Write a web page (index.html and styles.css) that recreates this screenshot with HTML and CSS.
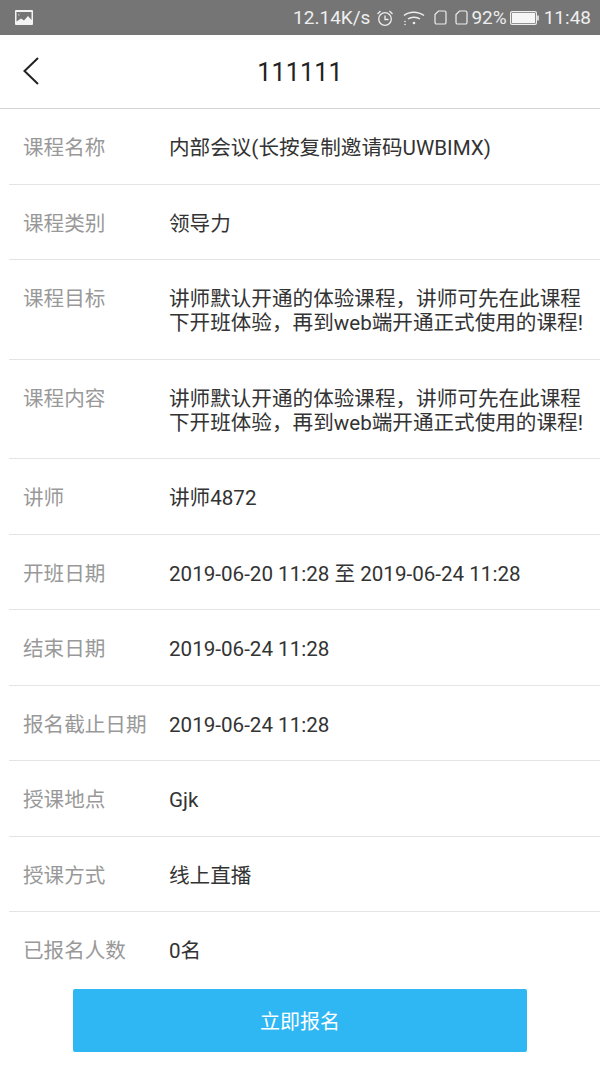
FILE: index.html
```html
<!DOCTYPE html>
<html lang="zh">
<head>
<meta charset="utf-8">
<title>111111</title>
<link rel="stylesheet" href="styles.css">
</head>
<body>
<div class="statusbar">
  <svg class="pic" width="18" height="15" viewBox="0 0 18 15"><rect width="18" height="15" rx="1" fill="#f4f4f4"/><path d="M1.500 2h15v8l-3.500-4-4 4.500-3-2-4.500 3z" fill="#757575"/><circle cx="4.500" cy="4" r="1.500" fill="#f4f4f4"/><path d="M1.500 2h3l3 3-2 1.500z" fill="#757575"/></svg>
  <div class="status-right">
    <span class="speed">12.14K/s</span>
    <svg class="ic-alarm" width="18" height="18" viewBox="0 0 18 18" fill="none" stroke="#eee" stroke-width="1.300"><circle cx="9" cy="10" r="6.300"/><path d="M9 6.500V10.500H12.500M1.500 5 4.500 2M16.500 5 13.500 2"/></svg>
    <svg class="ic-wifi" width="22" height="16" viewBox="0 0 22 16" fill="none" stroke="#eee" stroke-width="1.500"><path d="M1 5.500C6 1 15 1 21 5.500M5 9C8 6.500 14 6.500 17 9"/><circle cx="11" cy="13" r="1.300" fill="#eee" stroke="none"/><circle cx="2" cy="14.500" r=".8" fill="#eee" stroke="none"/><circle cx="2" cy="11.500" r=".8" fill="#eee" stroke="none"/></svg>
    <svg class="ic-sim" width="13" height="15" viewBox="0 0 13 15" fill="none" stroke="#eee" stroke-width="1.200"><path d="M4.500 1H10.500A1.500 1.500 0 0 1 12 2.500V12.500A1.500 1.500 0 0 1 10.500 14H2.500A1.500 1.500 0 0 1 1 12.500V4.500z"/></svg>
    <svg class="ic-sim2" width="13" height="15" viewBox="0 0 13 15" fill="none" stroke="#eee" stroke-width="1.200"><path d="M4.500 1H10.500A1.500 1.500 0 0 1 12 2.500V12.500A1.500 1.500 0 0 1 10.500 14H2.500A1.500 1.500 0 0 1 1 12.500V4.500z"/></svg>
    <span class="pct">92%</span>
    <svg class="ic-batt" width="29" height="14" viewBox="0 0 29 14"><rect x=".6" y=".6" width="25.800" height="12.800" rx="1.500" fill="none" stroke="#eee" stroke-width="1.200"/><rect x="2" y="2" width="23" height="10" fill="#f6f6f6"/><rect x="27.200" y="4.500" width="1.600" height="5" fill="#eee"/></svg>
    <span class="clock">11:48</span>
  </div>
</div>
<header class="navbar">
  <svg class="back" width="18" height="30" viewBox="0 0 18 30" fill="none" stroke="#222" stroke-width="2"><path d="M16 2 2.500 15 16 28"/></svg>
  <h1 class="title">111111</h1>
</header>
<main class="list">
  <div class="row"><div class="label">课程名称</div><div class="value">内部会议(长按复制邀请码UWBIMX)</div></div>
  <div class="row"><div class="label">课程类别</div><div class="value">领导力</div></div>
  <div class="row"><div class="label">课程目标</div><div class="value">讲师默认开通的体验课程，讲师可先在此课程<br>下开班体验，再到web端开通正式使用的课程!</div></div>
  <div class="row"><div class="label">课程内容</div><div class="value">讲师默认开通的体验课程，讲师可先在此课程<br>下开班体验，再到web端开通正式使用的课程!</div></div>
  <div class="row"><div class="label">讲师</div><div class="value">讲师4872</div></div>
  <div class="row"><div class="label">开班日期</div><div class="value">2019-06-20 11:28 至 2019-06-24 11:28</div></div>
  <div class="row"><div class="label">结束日期</div><div class="value">2019-06-24 11:28</div></div>
  <div class="row"><div class="label">报名截止日期</div><div class="value">2019-06-24 11:28</div></div>
  <div class="row"><div class="label">授课地点</div><div class="value">Gjk</div></div>
  <div class="row"><div class="label">授课方式</div><div class="value">线上直播</div></div>
  <div class="row last"><div class="label">已报名人数</div><div class="value">0名</div></div>
</main>
<div class="footer"><button class="signup">立即报名</button></div>
</body>
</html>
```
FILE: styles.css
```css
* { box-sizing: border-box; }
html, body { margin: 0; padding: 0; }
body {
  width: 600px;
  height: 1067px;
  overflow: hidden;
  background: #fff;
  font-family: Roboto, "Noto Sans CJK SC", sans-serif;
  display: flex;
  flex-direction: column;
}
.statusbar {
  height: 35px;
  flex: none;
  background: #757575;
  display: flex;
  align-items: center;
  justify-content: space-between;
  padding: 0 9px 0 15px;
  color: #eee;
  font-size: 19px;
}
.status-right { display: flex; align-items: center; }
.speed { margin-right: 6px; }
.ic-wifi { margin-left: 9px; }
.ic-sim { margin-left: 9px; }
.ic-sim2 { margin-left: 8px; }
.pct { margin-left: 3px; }
.ic-batt { margin-left: 3px; margin-right: 5px; }
.navbar {
  height: 74px;
  flex: none;
  display: flex;
  align-items: center;
  justify-content: center;
  position: relative;
  border-bottom: 1px solid #d4d4d4;
  background: #fff;
  padding-top: 2px;
}
.back { position: absolute; left: 22px; top: 21px; }
.title {
  margin: 0;
  font-size: 25px;
  font-weight: 400;
  letter-spacing: .2px;
  color: #222;
}
.list { margin-left: 9px; }
.row {
  display: flex;
  padding: 27px 0 23.5px;
  border-bottom: 1px solid #e4e4e4;
  font-size: 20.6px;
  line-height: 24px;
}
.row.last { border-bottom: 0; }
.label { width: 160px; flex: none; padding-left: 14px; color: #999; white-space: nowrap; }
.value { color: #333; white-space: nowrap; }
.footer {
  position: absolute;
  left: 0;
  right: 0;
  top: 989px;
  display: flex;
  justify-content: center;
}
.signup {
  width: 454px;
  height: 63px;
  border: 0;
  border-radius: 2px;
  background: #2eb7f3;
  color: #fff;
  font: 400 20px "Noto Sans CJK SC", sans-serif;
}
```
